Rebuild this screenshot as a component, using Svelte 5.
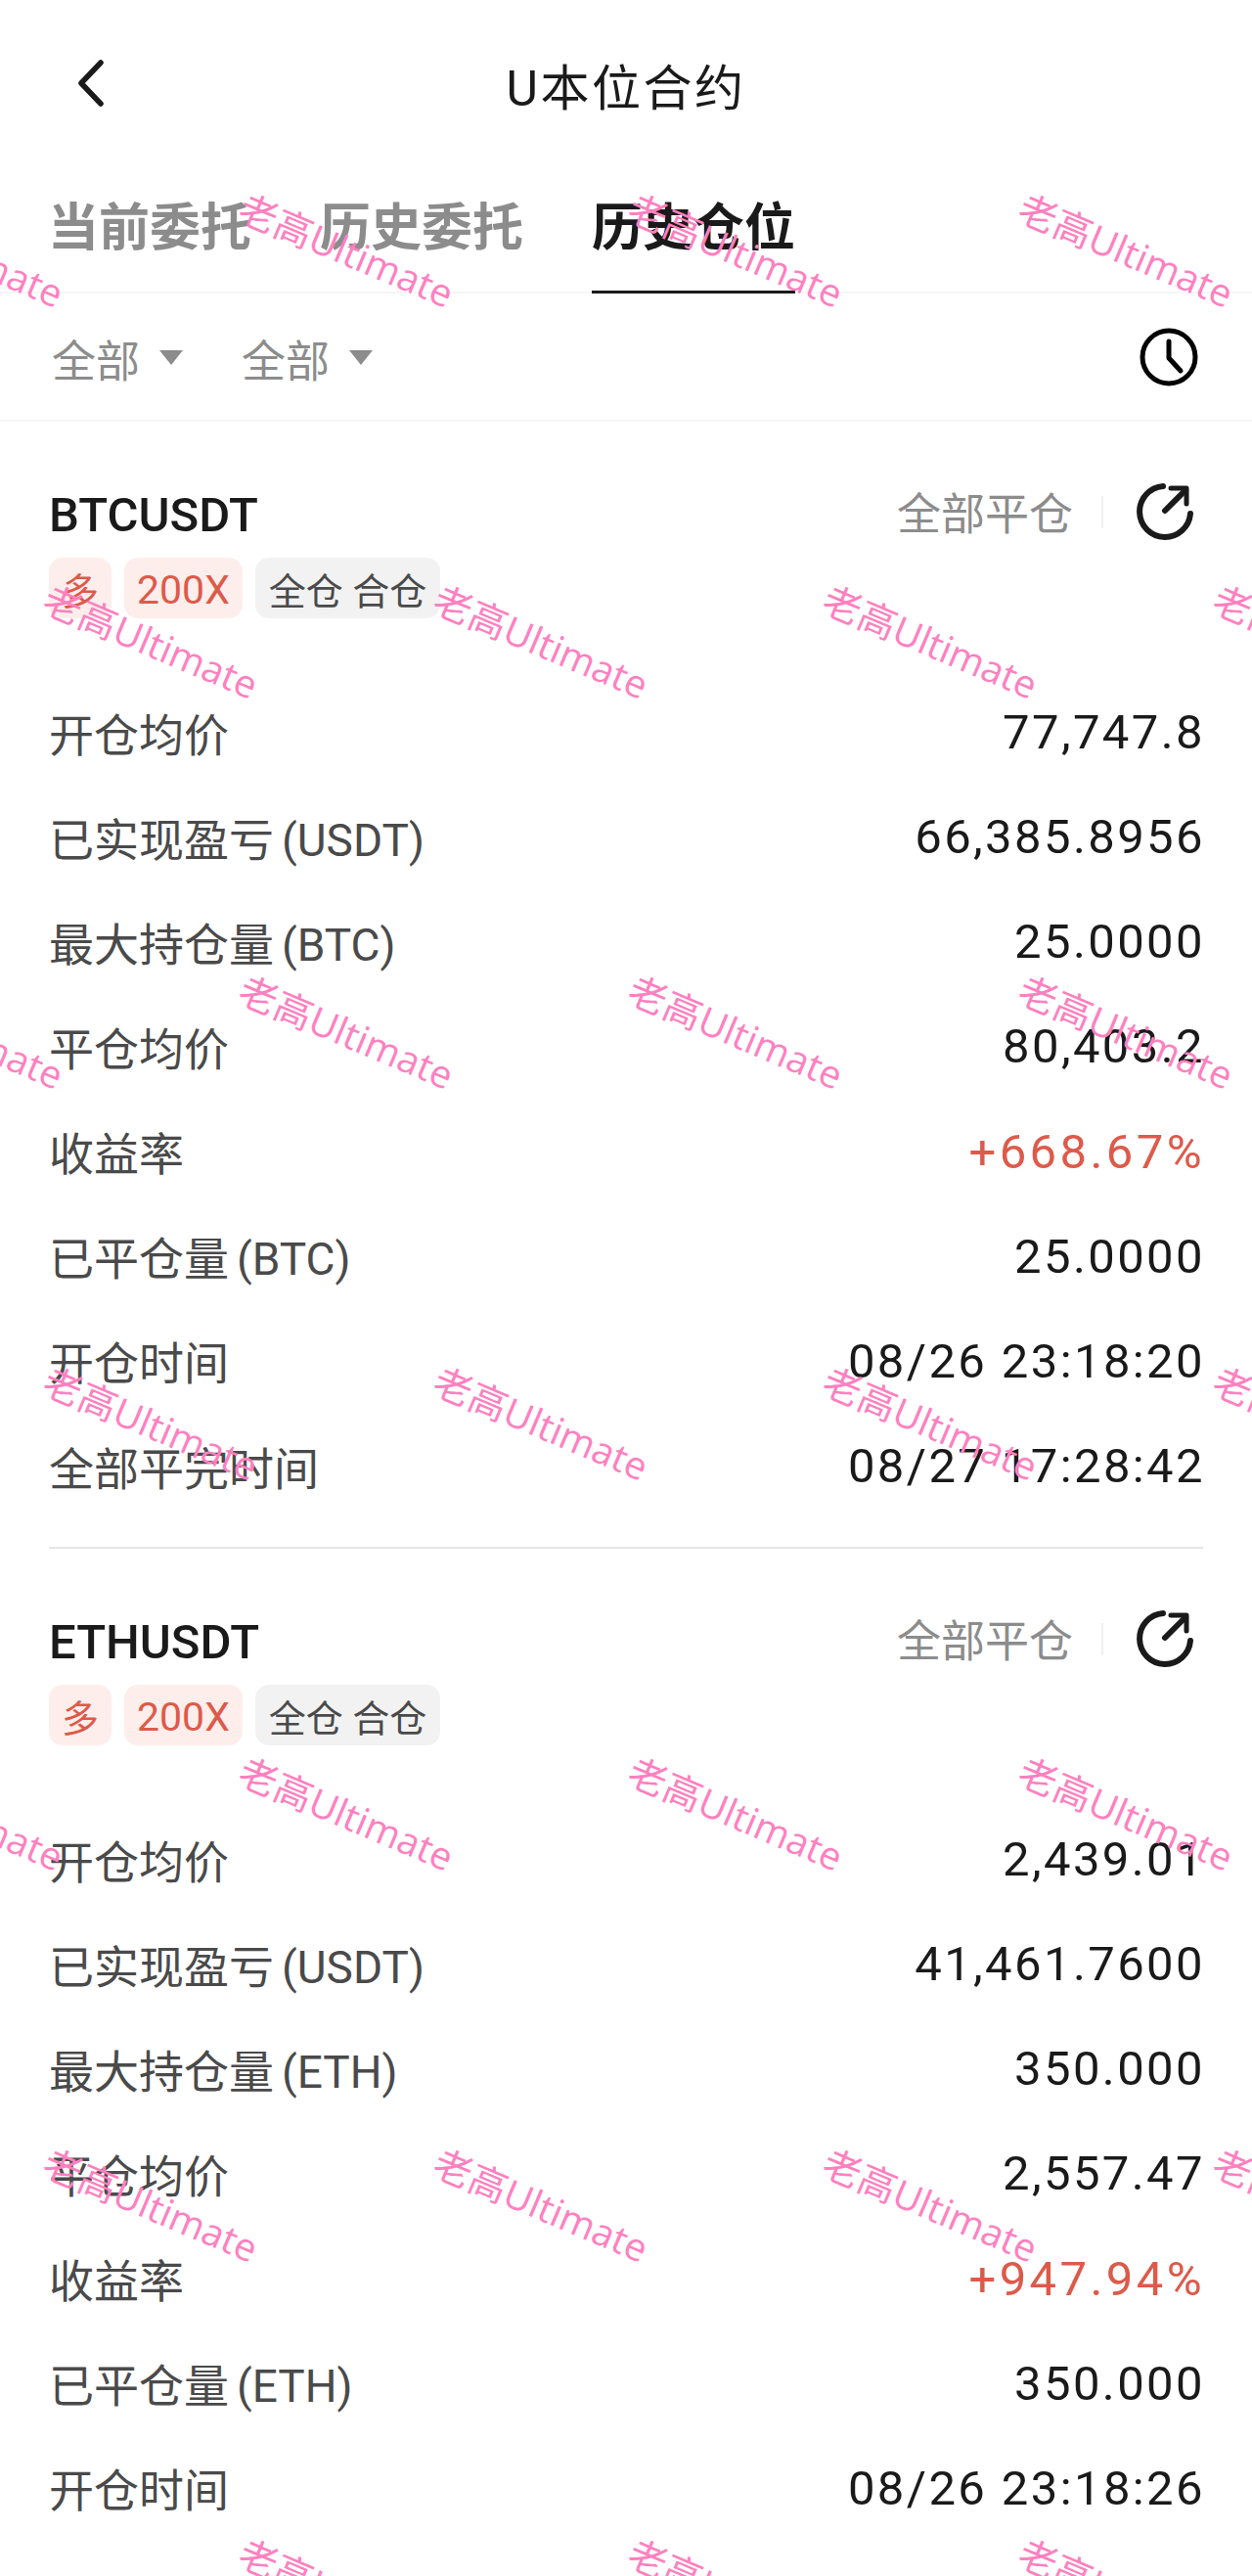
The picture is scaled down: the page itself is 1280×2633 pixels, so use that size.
<script lang="ts">
  const positions = [
    {
      symbol: 'BTCUSDT',
      rows: [
        ['开仓均价', '', '77,747.8'],
        ['已实现盈亏', '(USDT)', '66,385.8956'],
        ['最大持仓量', '(BTC)', '25.0000'],
        ['平仓均价', '', '80,403.2'],
        ['收益率', '', '+668.67%'],
        ['已平仓量', '(BTC)', '25.0000'],
        ['开仓时间', '', '08/26 23:18:20'],
        ['全部平完时间', '', '08/27 17:28:42']
      ]
    },
    {
      symbol: 'ETHUSDT',
      rows: [
        ['开仓均价', '', '2,439.01'],
        ['已实现盈亏', '(USDT)', '41,461.7600'],
        ['最大持仓量', '(ETH)', '350.000'],
        ['平仓均价', '', '2,557.47'],
        ['收益率', '', '+947.94%'],
        ['已平仓量', '(ETH)', '350.000'],
        ['开仓时间', '', '08/26 23:18:26']
      ]
    }
  ];

  // watermark tiles, rows alternate between two horizontal offsets
  const marks: { x: number; y: number }[] = [];
  for (let r = 0; r < 7; r++) {
    const startX = r % 2 === 0 ? -44 : 155;
    for (let c = 0; c < 5; c++) {
      marks.push({ x: startX + c * 398.5, y: 254 + r * 399.5 });
    }
  }
</script>

<div class="page">
  <header class="nav">
    <svg class="back" width="30" height="48" viewBox="0 0 30 48" fill="none" stroke="#1a1a1a" stroke-width="5.5" stroke-linecap="round" stroke-linejoin="round">
      <polyline points="25,3 5,24 25,45" />
    </svg>
    <div class="title">U本位合约</div>
  </header>

  <div class="tabs">
    <div class="tab">当前委托</div>
    <div class="tab">历史委托</div>
    <div class="tab active">历史仓位</div>
  </div>

  <div class="filters">
    <div class="filter">全部<span class="caret"></span></div>
    <div class="filter">全部<span class="caret"></span></div>
    <svg class="clock" width="60" height="60" viewBox="0 0 60 60" fill="none" stroke="#000" stroke-width="5" stroke-linecap="round" stroke-linejoin="round">
      <circle cx="30" cy="30" r="27" />
      <polyline points="30,14 30,31 42,44" />
    </svg>
  </div>

  {#each positions as pos, i}
    <section class="card" class:last={i === positions.length - 1}>
      <div class="card-head">
        <div class="symbol">{pos.symbol}</div>
        <div class="close-all">全部平仓</div>
        <span class="sep"></span>
        <svg class="share" width="60" height="60" viewBox="0 0 60 60" fill="none" stroke="#1a1a1a" stroke-width="6" stroke-linecap="round" stroke-linejoin="round">
          <path d="M28 4 A26 26 0 1 0 56 32" />
          <path d="M30 29 L51 8" />
          <path d="M36 6 H52 V22" stroke-width="5" />
        </svg>
      </div>

      <div class="tags">
        <span class="tag red">多</span>
        <span class="tag red wide">200X</span>
        <span class="tag grey">全仓 合仓</span>
      </div>

      <div class="rows">
        {#each pos.rows as row}
          <div class="row">
            <div class="label">{row[0]}{#if row[1]}<span class="unit">{row[1]}</span>{/if}</div>
            <div class="value" class:profit={row[2].startsWith('+')}>{row[2]}</div>
          </div>
        {/each}
      </div>
    </section>
  {/each}

  <div class="watermarks">
    {#each marks as m}
      <span class="mark" style="left: {m.x}px; top: {m.y}px">老高Ultimate</span>
    {/each}
  </div>
</div>

<style>
  :global(body) {
    margin: 0;
    background: #fff;
  }

  .page {
    position: relative;
    width: 1280px;
    height: 2633px;
    overflow: hidden;
    background: #fff;
    font-family: Roboto, 'Noto Sans CJK SC', sans-serif;
    color: #1a1a1a;
  }

  .nav {
    position: relative;
    height: 176px;
    display: flex;
    align-items: center;
    justify-content: center;
  }

  .back {
    position: absolute;
    left: 78px;
    top: 61px;
  }

  .title {
    font-size: 50px;
    letter-spacing: 2.5px;
    margin-top: -4px;
  }

  .tabs {
    height: 124px;
    display: flex;
    gap: 70px;
    padding-left: 49px;
    border-bottom: 2px solid #f5f5f5;
    box-sizing: border-box;
  }

  .tab {
    font-size: 52px;
    font-weight: 700;
    color: #8c8c8c;
    padding-top: 24px;
    box-sizing: border-box;
    height: 124px;
    line-height: 68px;
  }

  .tab.active {
    color: #1a1a1a;
    border-bottom: 3px solid #1a1a1a;
  }

  .filters {
    height: 131px;
    display: flex;
    align-items: center;
    gap: 60px;
    padding: 0 55px 0 53px;
    border-bottom: 2px solid #f5f5f5;
    box-sizing: border-box;
  }

  .filter {
    display: flex;
    align-items: center;
    gap: 20px;
    font-size: 45px;
    color: #8c8c8c;
    margin-top: 4px;
  }

  .caret {
    width: 0;
    height: 0;
    border-left: 12px solid transparent;
    border-right: 12px solid transparent;
    border-top: 15px solid #8c8c8c;
    margin-top: -3px;
  }

  .clock {
    margin-left: auto;
  }

  .card {
    margin: 0 50px;
    padding-top: 62px;
    height: 1152px;
    box-sizing: border-box;
    border-bottom: 2px solid #e6e6e6;
  }

  .card.last {
    border-bottom: none;
  }

  .card-head {
    display: flex;
    align-items: center;
    height: 60px;
  }

  .symbol {
    font-size: 49px;
    font-weight: 500;
    margin-right: auto;
    margin-top: 6px;
  }

  .close-all {
    font-size: 45px;
    color: #8c8c8c;
    margin-top: -2px;
  }

  .sep {
    width: 2px;
    height: 33px;
    background: #f0f0f0;
    margin: 0 33px 0 29px;
  }

  .share {
    margin-right: 9px;
  }

  .tags {
    display: flex;
    gap: 13px;
    margin-top: 17px;
  }

  .tag {
    height: 62px;
    display: flex;
    align-items: center;
    padding: 0 13px;
    border-radius: 14px;
    font-size: 38px;
  }

  .tag.red {
    background: #fdeeec;
    color: #dd5a4a;
  }

  .tag.wide {
    font-size: 41px;
    padding-top: 4px;
    box-sizing: border-box;
  }

  .tag.grey {
    background: #f2f2f2;
    color: #4a4a4a;
    font-size: 38px;
    padding: 0 14px;
  }

  .rows {
    margin-top: 62px;
  }

  .row {
    height: 107.15px;
    display: flex;
    align-items: center;
    justify-content: space-between;
  }

  .label {
    font-size: 46px;
    color: #4a4a4a;
  }

  .unit {
    margin-left: 8px;
    font-size: 46px;
  }

  .value {
    font-size: 49px;
    letter-spacing: 2.4px;
    color: #1a1a1a;
    margin-right: -2px;
    margin-top: 2px;
  }

  .value.profit {
    color: #dd5a4a;
    letter-spacing: 3.4px;
  }

  .watermarks {
    position: absolute;
    inset: 0;
    pointer-events: none;
  }

  .mark {
    position: absolute;
    transform: translate(-50%, -50%) rotate(23deg);
    white-space: nowrap;
    font-family: 'Open Sans', 'Noto Sans CJK SC', sans-serif;
    font-size: 39px;
    color: #ff80bf;
  }
</style>
